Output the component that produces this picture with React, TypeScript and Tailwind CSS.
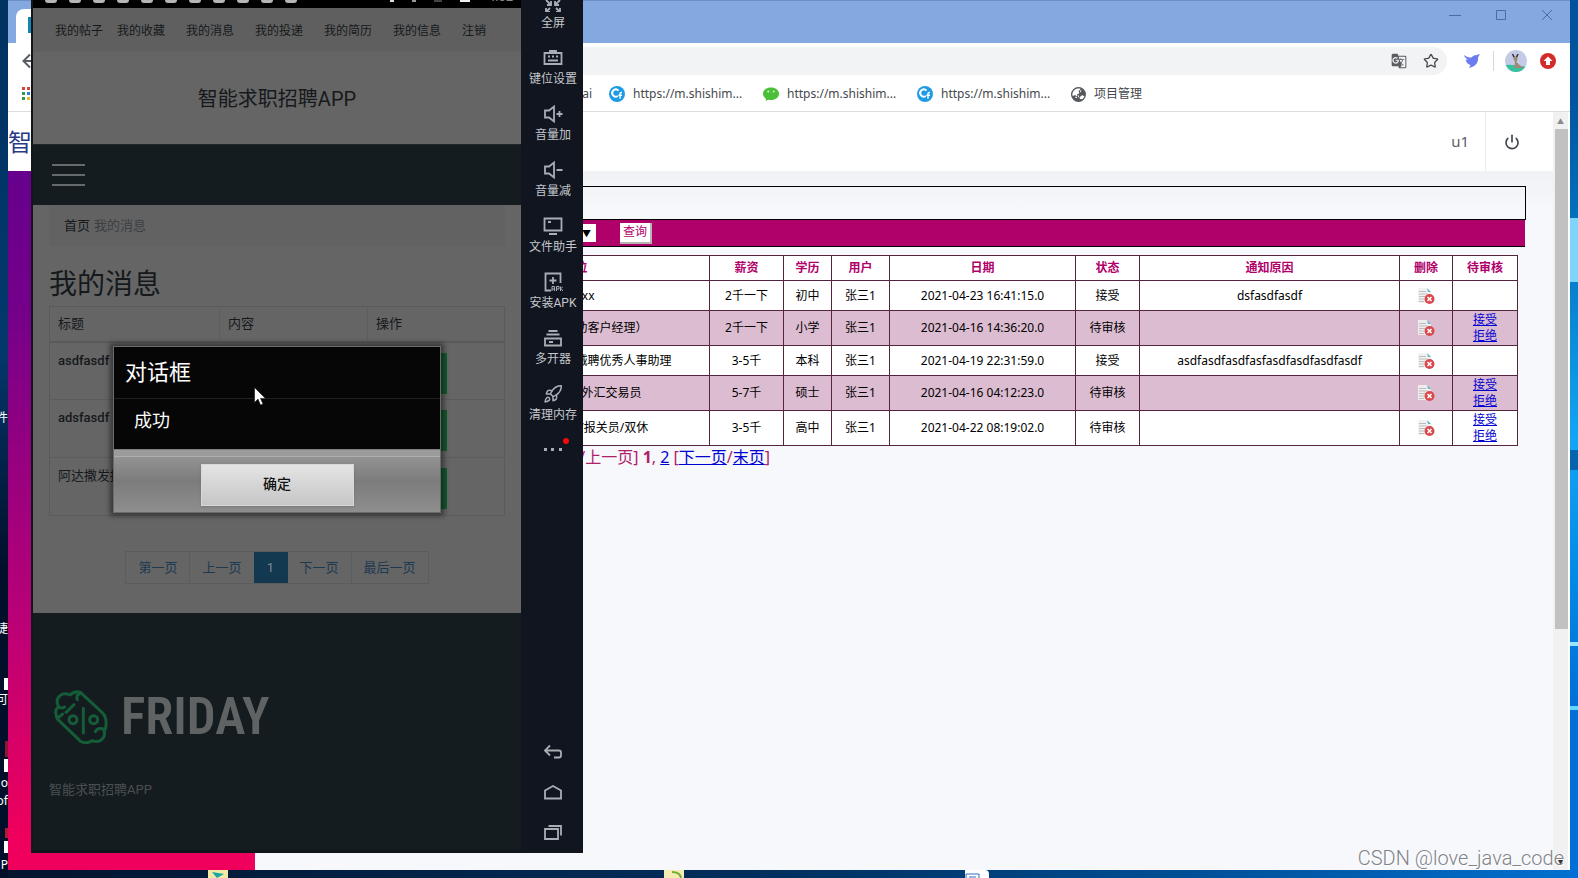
import React from "react";
import { MdGTranslate } from "react-icons/md";
import { FaEarthAsia } from "react-icons/fa6";
import { Star, Power, Rocket } from "lucide-react";

type Row = {
  id: string;
  job: string;
  pay: string;
  edu: string;
  date: string;
  state: string;
  reason: string;
  pending: boolean;
};

const rows: Row[] = [
  { id: "1", job: "xxxxxx", pay: "2千一下", edu: "初中", date: "2021-04-23 16:41:15.0", state: "接受", reason: "dsfasdfasdf", pending: false },
  { id: "2", job: "客户代表（协助客户经理）", pay: "2千一下", edu: "小学", date: "2021-04-16 14:36:20.0", state: "待审核", reason: "", pending: true },
  { id: "3", job: "上海企业管理公司诚聘优秀人事助理", pay: "3-5千", edu: "本科", date: "2021-04-19 22:31:59.0", state: "接受", reason: "asdfasdfasdfasfasdfasdfasdfasdf", pending: false },
  { id: "4", job: "贵金属原油及外汇交易员", pay: "5-7千", edu: "硕士", date: "2021-04-16 04:12:23.0", state: "待审核", reason: "", pending: true },
  { id: "5", job: "外贸专员/五险/报关员/双休", pay: "3-5千", edu: "高中", date: "2021-04-22 08:19:02.0", state: "待审核", reason: "", pending: true },
];

function SiteIcon() {
  return (
    <svg viewBox="0 0 16 16" className="size-4 shrink-0">
      <circle cx="8" cy="8" r="8" fill="#1f9be6" />
      <path d="M9.5 4.6A3.6 3.6 0 1 0 8.8 10" fill="none" stroke="#fff" strokeWidth="2" />
      <path d="M13 6.6c-1.6-.5-2 .4-2 1.6v4.6M9.4 9.2H13" fill="none" stroke="#fff" strokeWidth="1.4" />
    </svg>
  );
}

function ChatIcon() {
  return (
    <svg viewBox="0 0 16 16" className="size-4 shrink-0">
      <path d="M8 1.5c4.600 0 8 2.700 8 6.300s-3.400 6.300-8 6.300c-1 0-2-.1-2.800-.4L2.600 15l.4-2.300C1.200 11.600 0 9.800 0 7.800 0 4.200 3.400 1.500 8 1.500z" fill="#4cbf38" />
      <circle cx="5.300" cy="5.600" r="1" fill="#d8f5d0" />
      <circle cx="10.700" cy="5.600" r="1" fill="#d8f5d0" />
    </svg>
  );
}

function DeleteIcon() {
  return (
    <svg viewBox="0 0 18 18" className="mx-auto block size-[18px]">
      <path d="M1 1h9l4 4v11H1z" fill="#f1f1f1" fillOpacity="0.9" />
      <path d="M2 4.500h7M2 7h8M2 9.500h6M2 12h5M2 14.500h5" stroke="#bdbdbd" strokeWidth="1" />
      <path d="M10 1l4 4h-3z" fill="#5fb6c4" />
      <circle cx="12.500" cy="12" r="5" fill="#d9484c" />
      <path d="M10.500 10l4 4m0-4l-4 4" stroke="#fff" strokeWidth="1.600" />
    </svg>
  );
}

function Browser() {
  return (
    <div className="absolute inset-x-2 top-0 bottom-2 flex flex-col bg-white">
      <div className="flex h-[43px] shrink-0 items-start justify-between border-t border-[#6f8fc2] bg-[#83a9e0]">
        <div className="mt-2 ml-2 flex h-[34px] w-[240px] items-start rounded-t-lg bg-white pt-2 pl-3">
          <span className="size-4 bg-[#1587ae]" />
        </div>
        <div className="flex items-center gap-[34px] pt-[8px] pr-[17px] text-[#4c6ca4]">
          <button aria-label="最小化"><svg viewBox="0 0 12 12" className="size-3"><path d="M0 6.500h12" stroke="currentColor" /></svg></button>
          <button aria-label="最大化"><svg viewBox="0 0 12 12" className="size-3"><path d="M1.500 1.500h9v9h-9z" fill="none" stroke="currentColor" /></svg></button>
          <button aria-label="关闭"><svg viewBox="0 0 12 12" className="size-3"><path d="M1 1l10 10M11 1L1 11" stroke="currentColor" /></svg></button>
        </div>
      </div>

      <div className="flex h-9 shrink-0 items-center pr-[14px] pl-[14px]">
        <button aria-label="返回" className="w-6">
          <svg viewBox="0 0 16 16" className="size-4"><path d="M15 8H2M8 1.500L1.500 8 8 14.500" fill="none" stroke="#5a5d61" strokeWidth="2" /></svg>
        </button>
        <div className="ml-20 flex h-7 flex-1 items-center justify-end gap-4 rounded-full bg-[#f1f3f4] pr-2">
          <MdGTranslate className="size-4 text-[#5a5d61]" />
          <Star className="size-4 text-[#4b4e52]" />
        </div>
        <div className="ml-4 flex items-center">
          <svg viewBox="0 0 18 18" className="size-[18px]">
            <path d="M1 3c2.500 2 5 2.600 7.500 2.600C10 3.500 12 3 13 3.200l4-1.200-2 3.400c.5 4-1.500 7.800-6 9.600l-3 1 1.600-3C4.800 12.400 3 10 2.500 7.500L5 8C3 6.500 1.500 5 1 3z" fill="#6b7cf0" />
          </svg>
          <span className="ml-3 h-5 w-px bg-[#d5d7da]" />
          <svg viewBox="0 0 22 22" className="ml-[11px] size-[22px]">
            <defs><clipPath id="face"><circle cx="11" cy="11" r="11" /></clipPath></defs>
            <g clipPath="url(#face)">
              <path d="M0 0h22v22H0z" fill="#c3cbe6" />
              <path d="M0 15q8-1 22 2v5H0z" fill="#38c0a0" />
              <path d="M8 5l1.500 1.500h1.500l1.500-1.500v4l-1 3 4 4 3 1v1H9l1-6-1.500-3z" fill="#a08a76" />
              <path d="M7.500 4l1.500 3M13 4l-1.500 3" stroke="#333" strokeWidth="1.500" />
            </g>
          </svg>
          <svg viewBox="0 0 16 16" className="ml-[13px] size-4">
            <circle cx="8" cy="8" r="8" fill="#d22d2a" />
            <path d="M8 3.500L12.500 8H10v4H6V8H3.500z" fill="#fff" />
          </svg>
        </div>
      </div>

      <div className="flex h-[33px] shrink-0 items-center border-b border-[#dcdde0] pl-[14px] text-[12px] text-[#45484c]">
        <svg viewBox="0 0 13 13" className="mb-1 size-[13px] shrink-0">
          <path d="M0 0h3v3H0zM5 0h3v3H5z" fill="#d6453d" />
          <path d="M0 5h3v3H0zM0 10h3v3H0z" fill="#2e9c50" />
          <path d="M5 5h3v3H5z" fill="#2b7de0" />
          <path d="M5 10h3v3H5zM10 10h3v3h-3z" fill="#e8b62c" />
        </svg>
        <a href="#ai" className="w-[557px] pb-[2px] text-right">https://m.shishimai</a>
        <a href="#m1" className="ml-[17px] flex w-[154px] items-center gap-2 pb-[2px]"><SiteIcon />https://m.shishim...</a>
        <a href="#m2" className="flex w-[154px] items-center gap-2 pb-[2px]"><ChatIcon />https://m.shishim...</a>
        <a href="#m3" className="flex w-[154px] items-center gap-2 pb-[2px]"><SiteIcon />https://m.shishim...</a>
        <a href="#pm" className="flex items-center gap-2 pb-[2px]"><FaEarthAsia className="size-[15px] text-[#55585c]" />项目管理</a>
      </div>

      <div className="flex min-h-0 flex-1">
        <aside className="flex w-[247px] shrink-0 flex-col">
          <div className="flex h-[59px] items-center overflow-hidden text-[24px] whitespace-nowrap text-[#2b3a86]">智能求职招聘</div>
          <div className="flex-1 bg-[linear-gradient(to_bottom,#66008c_0%,#74008a_20%,#97007f_42%,#bd0075_66%,#ee005c_95%)]" />
        </aside>

        <main className="flex min-w-0 flex-1 flex-col bg-[#f6f8fc]">
          <header className="flex h-[59px] shrink-0 items-center justify-end bg-white pr-[33px]">
            <span className="pr-4 text-[15px] text-[#5c5f66]">u1</span>
            <span className="h-full w-px bg-[#ececf0]" />
            <button aria-label="退出" className="ml-[18px]"><Power className="size-4 text-[#44474d]" strokeWidth={2.500} /></button>
          </header>

          <div className="bg-linear-to-b from-[#eff1f4] to-[#f6f8fc] to-[40px] pt-[15px] pr-[27px] pl-[27px]">
            <div className="h-[34px] border border-black" />
            <div className="mr-px flex h-[27px] items-center border-b border-black bg-[#b0006a] pl-[250px]">
              <select aria-label="状态" className="h-[18px] w-16 appearance-none bg-white bg-none text-[12px]"><option> </option></select>
              <span className="-ml-[14px] w-[9px] text-[9px] leading-none text-black">▼</span>
              <button className="ml-[29px] h-[21px] w-8 border-r-2 border-b-2 border-[#b5b5b5] bg-white text-[12px] leading-[18px] text-[#b0006a]">查询</button>
            </div>

            <table className="mt-2 ml-2 w-[calc(100%-16px)] table-fixed border-collapse text-center text-[12px] leading-4 text-black [&_td]:border [&_td]:border-[#57243f] [&_th]:border [&_th]:border-[#57243f]">
              <colgroup>
                <col />
                <col className="w-[268px]" />
                <col className="w-[74px]" />
                <col className="w-[48px]" />
                <col className="w-[58px]" />
                <col className="w-[186px]" />
                <col className="w-[64px]" />
                <col className="w-[260px]" />
                <col className="w-[53px]" />
                <col className="w-[65px]" />
              </colgroup>
              <thead>
                <tr className="h-[25px] bg-white text-[#b0006a]">
                  <th>编号</th><th>职位</th><th>薪资</th><th>学历</th><th>用户</th><th>日期</th><th>状态</th><th>通知原因</th><th>删除</th><th>待审核</th>
                </tr>
              </thead>
              <tbody>
                {rows.map((r) => (
                  <tr key={r.id} className={(r.pending ? "h-[35px] " : "h-[30px] ") + (r.id === "2" || r.id === "4" ? "bg-[#dcbcd0]" : "bg-white")}>
                    <td>{r.id}</td>
                    <td>{r.job}</td>
                    <td>{r.pay}</td>
                    <td>{r.edu}</td>
                    <td>张三1</td>
                    <td>{r.date}</td>
                    <td>{r.state}</td>
                    <td>{r.reason}</td>
                    <td><button aria-label="删除" className="block w-full"><DeleteIcon /></button></td>
                    <td className="text-[#0000d0]">
                      {r.pending && (
                        <>
                          <a href="#accept" className="block underline">接受</a>
                          <a href="#refuse" className="block underline">拒绝</a>
                        </>
                      )}
                    </td>
                  </tr>
                ))}
              </tbody>
            </table>

            <div className="flex pl-[260px] text-[16px] leading-[22px] whitespace-pre text-[#b02068]">
              <span>[首页/上一页] <b>1</b>, <a href="#p2" className="text-[#0000d0] underline">2</a> [<a href="#next" className="text-[#0000d0] underline">下一页</a>/<a href="#last" className="text-[#0000d0] underline">末页</a>]</span>
            </div>
          </div>
        </main>

        <div className="mr-[2px] flex w-[15px] shrink-0 flex-col items-center justify-between bg-[#f1f1f1]">
          <div className="flex w-full flex-col items-end">
            <span className="h-[17px] w-full text-center text-[7px] leading-[20px] text-[#8a8a8a]">▲</span>
            <span className="h-[500px] w-[13px] bg-[#c1c1c1]" />
          </div>
          <span className="pb-[5px] text-[8px] leading-none text-[#333]">▼</span>
        </div>
      </div>
    </div>
  );
}

const phoneLinks = ["我的收藏", "我的消息", "我的投递", "我的简历", "我的信息", "注销"];

function FridayMark() {
  return (
    <svg viewBox="160 505 162 162" className="size-[54px]" fill="none" stroke="#155c38" strokeWidth="9" strokeLinejoin="round" strokeLinecap="round">
      <path d="M168 584Q160 565 174 555Q163 535 178 522Q190 512 208 520Q222 506 240 513L304 572Q318 586 316 606Q318 618 310 628Q316 645 300 656Q288 662 274 657Q258 668 240 659L172 594Q166 588 168 584" />
      <path d="M240 513Q224 522 230 534M174 555Q182 562 192 556M186 577L170 590M196 572L220 549M310 622Q290 616 284 630" />
      <circle cx="217" cy="594" r="12" />
      <circle cx="279" cy="594" r="12" />
      <path d="M248 560v74" />
    </svg>
  );
}

function AlertDialog() {
  return (
    <div role="dialog" aria-label="对话框" className="absolute top-[346px] left-[80px] flex h-[167px] w-[328px] flex-col border border-[#6a6a6a] bg-[#060606] shadow-[0_0_5px_3px_rgba(0,0,0,0.45)]">
      <div className="flex h-[52px] items-center border-b border-[#222] pl-[11px] text-[22px] text-white">对话框</div>
      <div className="flex h-[50px] items-center pb-2 pl-5 text-[18px] text-white">成功</div>
      <div className="flex flex-1 flex-col border-t border-[#7e7e7e] bg-linear-to-b from-[#9a9a9a] via-[#7c7c7c] to-[#8e8e8e]">
        <div className="h-[7px] border-b border-[#adadad] bg-[#9b9b9b]" />
        <div className="flex flex-1 items-center justify-center">
          <button className="h-[42px] w-[153px] border border-[#d8d8d8] bg-linear-to-b from-[#e4e4e4] to-[#c6c6c6] text-[14px] font-medium text-[#111] shadow">确定</button>
        </div>
      </div>
    </div>
  );
}

function PhoneScreen() {
  const messages = ["asdfasdf", "adsfasdf", "阿达撒发掘"];
  return (
    <div className="relative flex h-full w-[488px] flex-col overflow-hidden bg-[#656565] text-[#16191c]">
      <div className="flex h-2 shrink-0 items-start justify-between overflow-hidden bg-black pr-2 pl-3">
        <div className="flex gap-3">
          {Array.from({ length: 11 }, (_, i) => (
            <span key={i} className="h-[3px] w-3 rounded-b-sm bg-[#b5b5b5]" />
          ))}
        </div>
        <div className="flex items-start gap-[18px]">
          <span className="h-[2px] w-1 bg-[#ddd]" />
          <span className="h-[2px] w-1 bg-[#999]" />
          <span className="h-[2px] w-2 bg-[#444]" />
          <span className="h-[2px] w-[10px] bg-[#eee]" />
          <span className="-mt-[10px] text-[13px] leading-[14px] text-[#888]">4:02</span>
        </div>
      </div>

      <nav className="flex h-11 shrink-0 items-center gap-[21px] border-b border-[#626262] bg-[#5f5f5f] pt-[2px] pl-[22px] text-[12px]">
        <span className="flex gap-[14px]">
          <a href="#posts">我的帖子</a>
          <a href="#fav">{phoneLinks[0]}</a>
        </span>
        {phoneLinks.slice(1).map((t) => (
          <a key={t} href={"#" + t}>{t}</a>
        ))}
      </nav>

      <div className="flex h-[92px] shrink-0 items-center justify-center pt-[2px] text-[20px]">智能求职招聘APP</div>

      <div className="flex h-[61px] shrink-0 items-center border-t border-[#20272b] bg-[#141c20] pl-[19px]">
        <button aria-label="菜单" className="flex flex-col gap-2">
          <span className="h-[2px] w-[33px] bg-[#656a6c]" />
          <span className="h-[2px] w-[33px] bg-[#656a6c]" />
          <span className="h-[2px] w-[33px] bg-[#656a6c]" />
        </button>
      </div>

      <div className="h-[408px] shrink-0 px-4">
        <div className="flex h-[41px] items-center gap-1 bg-[#626262] pl-[15px] text-[13px]">
          <a href="#home">首页</a>
          <span className="text-[#3c4043]">我的消息</span>
        </div>
        <h1 className="mt-[18px] text-[28px] leading-[42px]">我的消息</h1>
        <table className="w-full table-fixed border-collapse border border-[#5a5a5a] text-left text-[13px]">
          <colgroup>
            <col className="w-[170px]" />
            <col className="w-[148px]" />
            <col />
          </colgroup>
          <thead>
            <tr className="h-[35px] border-b-2 border-[#5a5a5a]">
              <th className="border-r border-[#5d5d5d] pl-2 font-normal">标题</th>
              <th className="border-r border-[#5d5d5d] pl-2 font-normal">内容</th>
              <th className="pl-2 font-normal">操作</th>
            </tr>
          </thead>
          <tbody>
            {messages.map((m) => (
              <tr key={m} className="h-[58px] border-b border-[#5c5c5c] align-top">
                <td className={m.startsWith("a") ? "pt-2 pl-2 font-medium" : "pt-2 pl-2"}>{m}</td>
                <td />
                <td className="pt-[10px] pl-2"><button className="block h-[41px] w-[71px] bg-[#14592f] text-[#656565]">删除</button></td>
              </tr>
            ))}
          </tbody>
        </table>
        <div className="mt-[35px] flex justify-center text-[13px] text-[#1d3950]">
          <div className="flex h-[33px] border border-[#5c5c5c] [&>a]:flex [&>a]:items-center [&>a]:px-3">
            <a href="#first" className="border-r border-[#5c5c5c]">第一页</a>
            <a href="#prev">上一页</a>
            <a href="#1" className="w-[34px] justify-center bg-[#123950] text-[#7d8890]">1</a>
            <a href="#next" className="border-r border-[#5c5c5c]">下一页</a>
            <a href="#end">最后一页</a>
          </div>
        </div>
      </div>

      <footer className="flex flex-1 flex-col bg-[#141c1f] pt-[77px] pl-4">
        <div className="flex h-[54px] items-center pl-[5px]">
          <FridayMark />
          <span className="ml-[13px] font-['Roboto_Condensed','Liberation_Sans_Narrow','Roboto'] text-[51px] leading-[54px] font-semibold text-[#606364]">FRIDAY</span>
        </div>
        <p className="mt-[34px] text-[13px] leading-6 text-[#4a5053]">智能求职招聘APP</p>
      </footer>

      <AlertDialog />
    </div>
  );
}

const tools: { label: string; icon: React.ReactNode }[] = [
  { label: "全屏", icon: <path d="M3 8l5 5M8 9v4H4M17 8l-5 5M12 9v4h4M3 20l4-4M3 16v4h4M17 20l-4-4M17 16v4h-4" /> },
  { label: "键位设置", icon: <path d="M1.500 5h17v11h-17zM7 5V3h6v2M5 8.500h2M9 8.500h2M13 8.500h2M5 12.500h10" /> },
  { label: "音量加", icon: <path d="M2 6.500h4l5-4v15l-5-4H2zM13.500 10h6M16.500 7v6" /> },
  { label: "音量减", icon: <path d="M2 6.500h4l5-4v15l-5-4H2zM13.500 10h6" /> },
  { label: "文件助手", icon: <path d="M1.500 2.500h17v12h-17zM6 18h8M5 6h3" /> },
  { label: "安装APK", icon: <><path d="M8 18.500H2.500v-17h15V11M10 5v7M6.500 8.500h7" /><path d="M9 19v-4.500h2.500V19M9 17h2.500M13.500 19v-4.500H16v2.500h-2.500M17.500 14.500V19M20 14.500l-2 2 2 2.500" strokeWidth="1" /></> },
  { label: "多开器", icon: <path d="M5.500 3h9M3.500 6.500h13M2 10.500h16v7H2zM6 14h4" /> },
];

function ToolRail() {
  return (
    <div className="flex flex-1 flex-col items-center justify-between bg-[#11151f] pb-2 pl-[2px] text-[#a9adb4]">
      <div className="flex flex-col items-center">
        {tools.map((t, i) => (
          <button key={t.label} className={"flex flex-col items-center text-[12px] leading-4 " + (i === 0 ? "-mt-2 h-14" : "h-14")}>
            <svg viewBox="0 0 20 20" className="mb-[3px] size-5 shrink-0" fill="none" stroke="currentColor" strokeWidth="1.800">{t.icon}</svg>
            <span className="text-[#c4c7cc]">{t.label}</span>
          </button>
        ))}
        <button className="flex h-14 flex-col items-center text-[12px] leading-4">
          <Rocket className="mb-[3px] size-5" strokeWidth={1.800} />
          <span className="text-[#c4c7cc]">清理内存</span>
        </button>
        <button aria-label="更多" className="relative flex h-[18px] w-[18px] items-center justify-between">
          <span className="size-[3px] bg-current" />
          <span className="size-[3px] bg-current" />
          <span className="size-[3px] bg-current" />
          <span className="absolute -top-[2px] -right-[7px] size-[6px] rounded-full bg-[#f00a0a]" />
        </button>
      </div>
      <div className="flex flex-col gap-5 [&_svg]:size-5">
        <button aria-label="返回"><svg viewBox="0 0 20 20" fill="none" stroke="currentColor" strokeWidth="1.800"><path d="M7 3.500L2 8.500l5 5M2 8.500h14q2 0 2 2v3q0 2-2 2h-5" /></svg></button>
        <button aria-label="主页"><svg viewBox="0 0 20 20" fill="none" stroke="currentColor" strokeWidth="1.800"><path d="M2 16.500V8.500l8-4.500 8 4.500v8z" /></svg></button>
        <button aria-label="最近任务"><svg viewBox="0 0 20 20" fill="none" stroke="currentColor" strokeWidth="1.800"><path d="M2 7h13v10H2zM5.500 4H18v9.500" /></svg></button>
      </div>
    </div>
  );
}

export default function App() {
  return (
    <div className="relative h-screen overflow-hidden bg-linear-to-r from-[#03142d] via-[#00305f] to-[#0070d0] font-['Noto_Sans','Noto_Sans_CJK_SC',sans-serif]">
      <div className="absolute inset-y-0 left-0 w-2 overflow-hidden bg-linear-to-b from-[#003262] via-[#04386c] via-40% to-[#020f2a] to-65% text-[12px] leading-4 text-white">
        <span className="absolute top-[410px] right-0">件</span>
        <span className="absolute top-[621px] right-0">捷</span>
        <span className="absolute top-[678px] right-0 h-3 w-1 bg-white" />
        <span className="absolute top-[692px] right-0">可</span>
        <span className="absolute top-[741px] right-0 h-4 w-[3px] bg-[#8c1730]" />
        <span className="absolute top-[759px] right-0 h-[13px] w-1 bg-white" />
        <span className="absolute top-[775px] right-0">o</span>
        <span className="absolute top-[793px] right-0">of</span>
        <span className="absolute top-[828px] right-0 h-[10px] w-[3px] bg-[#b01a34]" />
        <span className="absolute top-[841px] right-0 h-3 w-1 bg-white" />
        <span className="absolute top-[857px] right-0">P</span>
      </div>
      <div className="absolute inset-y-0 right-0 w-2 bg-linear-to-b from-[#00539c] from-10% via-[#12a5f5] via-50% to-[#0070d8] to-80%">
        <span className="absolute top-[218px] right-0 h-16 w-2 bg-[#7fd4fa]" />
        <span className="absolute top-[450px] right-0 h-5 w-2 bg-[#0564ae]" />
        <span className="absolute top-[642px] right-0 h-1 w-2 bg-[#9ce6fb]" />
        <span className="absolute top-[706px] right-0 h-1 w-2 bg-[#62d6fb]" />
      </div>

      <Browser />

      <div className="absolute bottom-0 left-[208px] h-2 w-5 overflow-hidden bg-[#f3e9a6]"><svg viewBox="0 0 20 8" className="h-2 w-5"><path d="M4 2l12 2-7 4z" fill="#18a5a5" /></svg></div>
      <div className="absolute bottom-0 left-[664px] h-2 w-5 overflow-hidden bg-[#f5ecb4]"><svg viewBox="0 0 20 8" className="h-2 w-5"><path d="M8 2q8 0 9 6" fill="none" stroke="#6fae35" strokeWidth="2" /></svg></div>
      <div className="absolute bottom-0 left-[965px] h-2 w-6 overflow-hidden rounded-tr bg-white"><svg viewBox="0 0 24 8" className="h-2 w-6"><path d="M1 8V4h13v4M4 7h7" fill="none" stroke="#2f6fc4" /></svg></div>

      <div className="absolute top-0 left-[31px] flex h-[853px] w-[552px] border-b-[3px] border-l-2 border-[#11151c] bg-[#11151f] font-['Roboto','Noto_Sans_CJK_SC',sans-serif]">
        <PhoneScreen />
        <ToolRail />
      </div>

      <svg viewBox="0 0 12 19" className="absolute top-[387px] left-[254px] h-[19px] w-3"><path d="M0.500 0.500v15l3.500-3.400 2.500 6 2.500-1-2.500-5.700h5z" fill="#fff" stroke="#111" strokeWidth="0.600" /></svg>

      <div className="absolute right-[14px] bottom-2 font-['Roboto'] text-[20px] leading-6 font-light text-[#808287] [text-shadow:1px_1px_0_#fff]">CSDN @love_java_code</div>
    </div>
  );
}
